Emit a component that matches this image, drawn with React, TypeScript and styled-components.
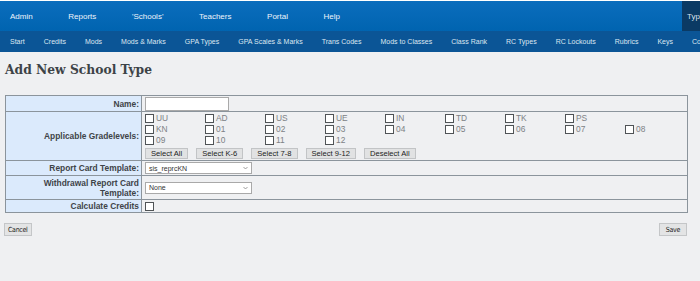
import React, { FC } from "react";
import styled, { createGlobalStyle } from "styled-components";

const GlobalStyle = createGlobalStyle`
  html, body {
    margin: 0;
    padding: 0;
    background: #eff0f2;
    font-family: "Liberation Sans", Arial, sans-serif;
  }
`;

const topItems = ["Admin", "Reports", "'Schools'", "Teachers", "Portal", "Help"];
const subItems = [
  "Start", "Credits", "Mods", "Mods & Marks", "GPA Types", "GPA Scales & Marks",
  "Trans Codes", "Mods to Classes", "Class Rank", "RC Types", "RC Lockouts",
  "Rubrics", "Keys", "Config",
];

const gradeRows = [
  ["UU", "AD", "US", "UE", "IN", "TD", "TK", "PS"],
  ["KN", "01", "02", "03", "04", "05", "06", "07", "08"],
  ["09", "10", "11", "12"],
];

const selectButtons = ["Select All", "Select K-6", "Select 7-8", "Select 9-12", "Deselect All"];

const Page = styled.div`
  width: 700px;
  height: 281px;
  overflow: hidden;
`;

const TopNav = styled.nav`
  display: flex;
  height: 30px;
  border-top: 1px solid #ffffff;
  background: linear-gradient(#0b6dbd, #0064b0);
  overflow: hidden;
`;

const TopItem = styled.a`
  display: flex;
  align-items: center;
  padding: 0 17.8px;
  color: #eef4fb;
  font-size: 8px;
  text-decoration: none;
  &:first-child {
    padding-left: 10px;
  }
`;

const Spacer = styled.div`
  flex: 1;
`;

const CurrentTab = styled.div`
  display: flex;
  align-items: center;
  width: 13px;
  padding-left: 5px;
  background: #0b3a64;
  color: #d8e3ee;
  font-size: 8px;
  white-space: nowrap;
  overflow: hidden;
`;

const SubNav = styled.nav`
  display: flex;
  height: 21px;
  background: #0b5596;
  overflow: hidden;
  white-space: nowrap;
`;

const SubItem = styled.a`
  display: flex;
  align-items: center;
  padding: 0 9.5px;
  color: #dde7f1;
  font-size: 7px;
  text-decoration: none;
  &:first-child {
    padding-left: 10px;
  }
`;

const Content = styled.main`
  padding: 0 12px 0 5px;
`;

const Title = styled.h1`
  margin: 10px 0 18px;
  font-family: "DejaVu Serif", "Liberation Serif", serif;
  font-size: 12.3px;
  font-weight: bold;
  color: #3d4347;
`;

const Table = styled.table`
  width: 100%;
  border-collapse: collapse;
  border: 1px solid #8b949c;
`;

const Label = styled.th`
  width: 129px;
  padding: 0 2px 0 4px;
  background: #dbeafc;
  border: 1px solid #8b949c;
  color: #3f4448;
  font-size: 8.4px;
  font-weight: bold;
  text-align: right;
  line-height: 10px;
`;

const Cell = styled.td<{ $h: number }>`
  height: ${(p) => p.$h}px;
  padding: 0 0 0 3px;
  border: 1px solid #8b949c;
  vertical-align: middle;
  font-size: 8px;
  line-height: 1;
`;

const TextInput = styled.input`
  display: block;
  box-sizing: border-box;
  width: 84px;
  height: 14px;
  margin: 0;
  padding: 0 2px;
  border: 1px solid #a9a9a9;
  background: #ffffff;
`;

const Grades = styled.div`
  padding-top: 1px;
`;

const GradeRow = styled.div`
  display: grid;
  grid-template-columns: repeat(9, 60px);
  height: 11px;
`;

const Grade = styled.label`
  display: flex;
  align-items: center;
  gap: 2px;
  color: #7d8185;
  font-size: 8.4px;
  line-height: 11px;
`;

const Box = styled.span`
  display: block;
  box-sizing: border-box;
  width: 9px;
  height: 9px;
  border: 1px solid #4f5356;
  background: #ffffff;
`;

const ButtonRow = styled.div`
  display: flex;
  gap: 8px;
  margin: 2px 0 1px;
`;

const GrayButton = styled.button`
  height: 11px;
  padding: 0 5px;
  border: 1px solid #c2c4c6;
  background: #e1e2e3;
  color: #222;
  font-family: "Liberation Sans", Arial, sans-serif;
  font-size: 7.6px;
  line-height: 9px;
`;

const Select = styled.div`
  display: flex;
  align-items: center;
  justify-content: space-between;
  box-sizing: border-box;
  width: 107px;
  height: 12px;
  padding: 0 3px;
  border: 1px solid #a9a9a9;
  background: #ffffff;
  color: #333;
  font-size: 7px;
`;

const Chevron = styled.svg`
  width: 5px;
  height: 4px;
`;

const Footer = styled.div`
  display: flex;
  justify-content: space-between;
  margin: 10px 1px 0 -1px;
`;

const FooterButton = styled.button<{ $pad: number }>`
  height: 13px;
  padding: 0 ${(p) => p.$pad}px;
  border: 1px solid #c4c6c8;
  background: #e3e4e5;
  color: #222;
  font-family: "DejaVu Sans Condensed", "Liberation Sans", sans-serif;
  font-size: 7px;
  letter-spacing: -0.3px;
`;

const Dropdown: FC<{ value: string }> = ({ value }) => (
  <Select>
    <span>{value}</span>
    <Chevron viewBox="0 0 5 4">
      <path d="M0.5 1 L2.5 3 L4.5 1" fill="none" stroke="#777" strokeWidth="0.7" />
    </Chevron>
  </Select>
);

export default function App() {
  return (
    <Page>
      <GlobalStyle />
      <TopNav>
        {topItems.map((t) => (
          <TopItem key={t}>{t}</TopItem>
        ))}
        <Spacer />
        <CurrentTab>Typ</CurrentTab>
      </TopNav>
      <SubNav>
        {subItems.map((t) => (
          <SubItem key={t}>{t}</SubItem>
        ))}
      </SubNav>
      <Content>
        <Title>Add New School Type</Title>
        <Table>
          <tbody>
            <tr>
              <Label>Name:</Label>
              <Cell $h={15}>
                <TextInput />
              </Cell>
            </tr>
            <tr>
              <Label>Applicable Gradelevels:</Label>
              <Cell $h={46}>
                <Grades>
                  {gradeRows.map((row, i) => (
                    <GradeRow key={i}>
                      {row.map((g) => (
                        <Grade key={g}>
                          <Box />
                          {g}
                        </Grade>
                      ))}
                    </GradeRow>
                  ))}
                </Grades>
                <ButtonRow>
                  {selectButtons.map((b) => (
                    <GrayButton key={b}>{b}</GrayButton>
                  ))}
                </ButtonRow>
              </Cell>
            </tr>
            <tr>
              <Label>Report Card Template:</Label>
              <Cell $h={14}>
                <Dropdown value="sis_reprcKN" />
              </Cell>
            </tr>
            <tr>
              <Label>Withdrawal Report Card Template:</Label>
              <Cell $h={23}>
                <Dropdown value="None" />
              </Cell>
            </tr>
            <tr>
              <Label>Calculate Credits</Label>
              <Cell $h={12}>
                <Box />
              </Cell>
            </tr>
          </tbody>
        </Table>
        <Footer>
          <FooterButton $pad={3}>Cancel</FooterButton>
          <FooterButton $pad={6}>Save</FooterButton>
        </Footer>
      </Content>
    </Page>
  );
}
